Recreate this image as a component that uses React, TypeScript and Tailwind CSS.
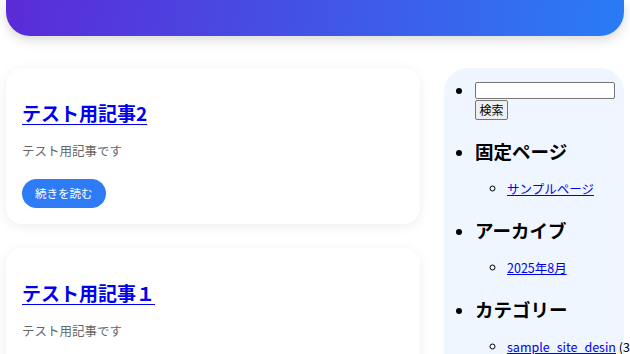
import React from 'react';

const jp = "font-['Noto_Sans_CJK_JP',sans-serif]";

interface PostProps {
  title: string;
  excerpt: string;
  showButton: boolean;
}

const PostCard: React.FC<PostProps> = ({ title, excerpt, showButton }) => {
  return (
    <article className="bg-white rounded-[16px] shadow-[0_2px_12px_rgba(0,0,0,0.07)] px-[16px] pt-[31px] pb-[16px]">
      <h2 className="text-[19px] leading-[28px] font-bold">
        <a href="#" className="text-[#0000ee] underline underline-offset-[3px]">{title}</a>
      </h2>
      <p className="mt-[14px] text-[12.5px] leading-[20px] text-[#666]">{excerpt}</p>
      {showButton && (
        <a
          href="#"
          className="mt-[18px] inline-flex items-center h-[29px] px-[13px] rounded-full bg-[#2d7cf6] text-white text-[11.5px]"
        >
          続きを読む
        </a>
      )}
    </article>
  );
};

const Section: React.FC<{ heading: string; children: React.ReactNode }> = ({ heading, children }) => (
  <li className="mt-[19px]">
    <h2 className="text-[18.5px] leading-[24px] font-bold text-black">{heading}</h2>
    <ul className="mt-[16px] pl-[32px] list-[circle] text-[12.5px] leading-[20px]">
      <li>{children}</li>
    </ul>
  </li>
);

export default function App() {
  return (
    <div className={`h-[354px] w-full overflow-hidden bg-white ${jp}`}>
      <header className="mx-[6px] h-[36px] rounded-b-[24px] bg-[linear-gradient(100deg,#5b2bd6,#2a7cf6)] shadow-[0_4px_12px_rgba(0,0,0,0.15)]" />

      <div className="mx-[6px] mt-[32px] flex gap-[24px]">
        <main className="w-[414px] shrink-0 flex flex-col gap-[24px]">
          <PostCard title="テスト用記事2" excerpt="テスト用記事です" showButton />
          <PostCard title="テスト用記事１" excerpt="テスト用記事です" showButton />
        </main>

        <aside className="flex-1 min-w-0 bg-blue-50 rounded-[24px] pt-[10px] pb-[20px] whitespace-nowrap">
          <ul className="pl-[31px] list-disc">
            <li>
              <div className="flex flex-col items-start">
                <input
                  type="text"
                  className="w-[140px] h-[17px] border border-[#767676] rounded-[2px] bg-white"
                />
                <button className="mt-[1px] w-[33px] h-[20px] border border-[#767676] rounded-[2px] bg-[#efefef] text-[12px] leading-none text-black">
                  検索
                </button>
              </div>
            </li>
            <Section heading="固定ページ">
              <a href="#" className="text-[#0000ee] underline">サンプルページ</a>
            </Section>
            <Section heading="アーカイブ">
              <a href="#" className="text-[#0000ee] underline">2025年8月</a>
            </Section>
            <Section heading="カテゴリー">
              <a href="#" className="text-[#0000ee] underline">sample_site_desin</a> (3)
            </Section>
          </ul>
        </aside>
      </div>
    </div>
  );
}
